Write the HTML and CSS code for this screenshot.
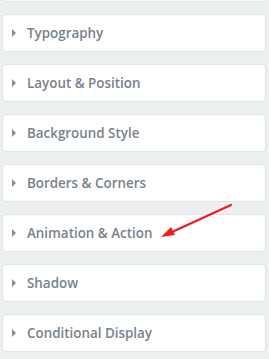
FILE: index.html
```html
<!DOCTYPE html>
<html lang="en">

<head>
  <meta charset="UTF-8">
  <title>Style Panel</title>
  <link rel="stylesheet" href="styles.css">
</head>

<body>
  <div class="panel">
    <div class="section section-cut"></div>
    <div class="section"><span class="caret"></span>Typography</div>
    <div class="section"><span class="caret"></span>Layout &amp; Position</div>
    <div class="section"><span class="caret"></span>Background Style</div>
    <div class="section"><span class="caret"></span>Borders &amp; Corners</div>
    <div class="section"><span class="caret"></span>Animation &amp; Action</div>
    <div class="section"><span class="caret"></span>Shadow</div>
    <div class="section"><span class="caret"></span>Conditional Display</div>
  </div>

  <svg class="pointer" width="269" height="359" viewBox="0 0 269 359">
    <line x1="231" y1="205" x2="172" y2="232" stroke="#ee1c1c" stroke-width="2.2" stroke-linecap="round" />
    <polygon points="161,237 171,227 175,235" fill="#ee1c1c" />
  </svg>
</body>

</html>
```

FILE: styles.css
```css
body {
  margin: 0;
  padding: 0;
  background-color: #edf0f1;
  font-family: 'Open Sans', 'Liberation Sans', sans-serif;
  overflow: hidden;
}

.panel {
  display: flex;
  flex-direction: column;
  gap: 12px;
  padding: 0 3px 0 2px;
}

.section {
  display: flex;
  align-items: center;
  height: 36px;
  padding-left: 9px;
  background-color: #ffffff;
  border: 1px solid #dfe4e6;
  border-radius: 4px;
  color: #78828c;
  font-size: 13.4px;
  font-weight: 600;
}

.section-cut {
  margin-top: -36px;
}

.caret {
  width: 0;
  height: 0;
  border-top: 4px solid transparent;
  border-bottom: 4px solid transparent;
  border-left: 4px solid #878e96;
  margin-right: 11px;
}

.pointer {
  position: absolute;
  left: 0;
  top: 0;
  pointer-events: none;
}
```
